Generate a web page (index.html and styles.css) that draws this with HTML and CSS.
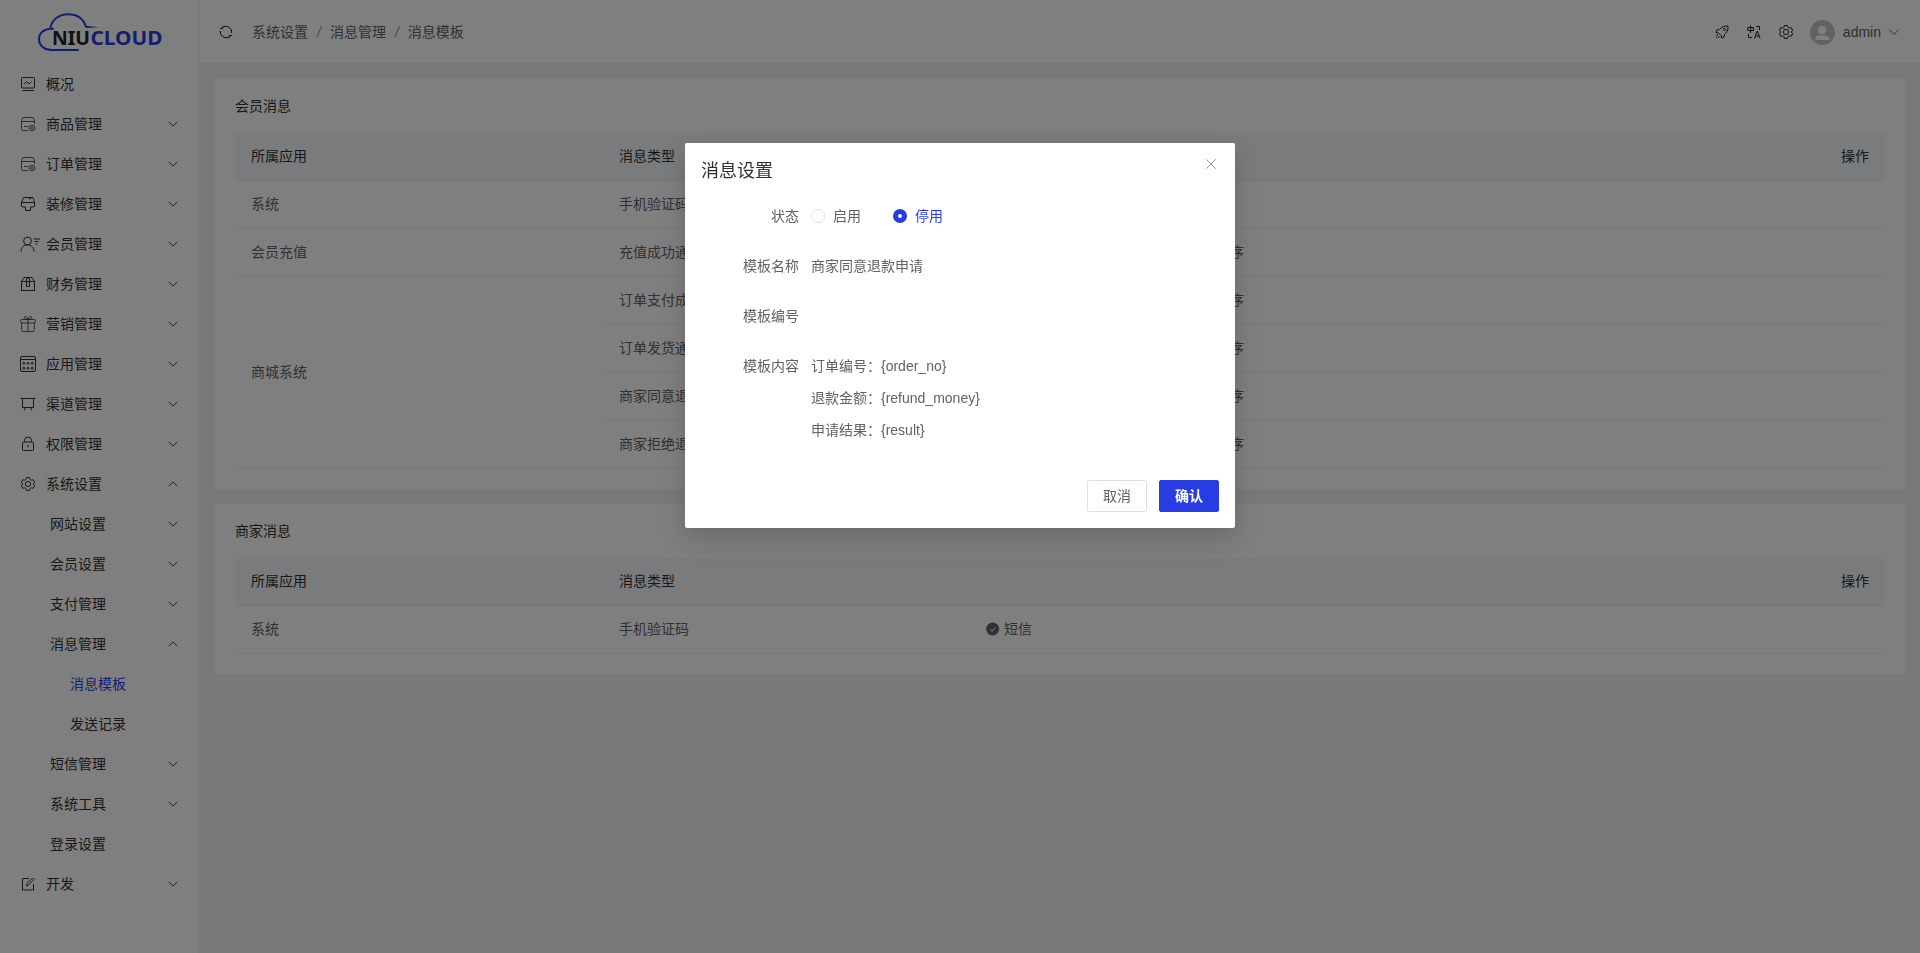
FILE: index.html
```html
<!DOCTYPE html>
<html lang="zh-CN">
<head>
    <meta charset="UTF-8">
    <meta name="viewport" content="width=device-width, initial-scale=1.0">
    <title>消息模板</title>
    <link rel="stylesheet" href="styles.css">
</head>
<body>
    <svg class="sprite" aria-hidden="true">
        <symbol id="i-down" viewBox="0 0 12 12"><path d="M1.800 4 6 8l4.200-4"/></symbol>
        <symbol id="i-up" viewBox="0 0 12 12"><path d="M1.800 8 6 4l4.200 4"/></symbol>
        <symbol id="i-chart" viewBox="0 0 16 16"><rect x="1.500" y="1.500" width="13" height="10.500" rx="1"/><path d="M4 8.500l2.500-3 2.500 2.500 2.500-2.500M2.500 14.500h11.500"/></symbol>
        <symbol id="i-box" viewBox="0 0 16 16"><path d="M8 14.500H2.500a1 1 0 0 1-1-1V4.500l1.300-3h10.400l1.300 3V8M1.500 5.500h13M4 10.500h4"/><circle cx="12" cy="12" r="2.800"/><circle cx="12" cy="12" r="1"/></symbol>
        <symbol id="i-brush" viewBox="0 0 16 16"><path d="M3.500 1.500h9.500l1.500 5v3.500a1 1 0 0 1-1 1H10.500v3.500h-5V11H2.500a1 1 0 0 1-1-1V6.500l2-5M1.500 6.500h13M8 1.500l1.500 1.500M10 3.500l1-2"/></symbol>
        <symbol id="i-user" viewBox="0 0 20 16"><circle cx="7.500" cy="5" r="3.900"/><path d="M1 15.500c.3-4 2.500-6.600 6.500-6.600s6.200 2.600 6.500 6.600M13.500 3H20M14.500 5.500h4M15.500 8h2"/></symbol>
        <symbol id="i-case" viewBox="0 0 16 16"><path d="M1.500 5.500h13v9h-13zM1.500 5.500l2.500-4h8l2.500 4M6.500 5.500v5h3v-5M6.500 5V3l1.500-1 1.500 1v2"/></symbol>
        <symbol id="i-gift" viewBox="0 0 16 16"><rect x=".7" y="3.500" width="14.600" height="3.500" rx="1"/><path d="M1.700 7v7.500a1 1 0 0 0 1 1h10.600a1 1 0 0 0 1-1V7M8 3.500v12M8 3.500C6 3.500 4 2.500 4.300 1.200S7.500.5 8 3.500c.5-3 3.400-3.500 3.700-2.300S10 3.500 8 3.500z"/></symbol>
        <symbol id="i-grid" viewBox="0 0 16 16"><rect x=".5" y=".5" width="15" height="15" rx="1.500"/><path d="M.5 3.500h15"/><circle cx="3.800" cy="7.300" r="1"/><circle cx="8" cy="7.300" r="1"/><circle cx="12.200" cy="7.300" r="1"/><circle cx="3.800" cy="12.300" r="1"/><circle cx="8" cy="12.300" r="1"/><circle cx="12.200" cy="12.300" r="1"/></symbol>
        <symbol id="i-board" viewBox="0 0 16 16"><path d="M.5 2.500h15M2.500 2.500v9h11v-9M5.500 11.500l-1.500 3M10.500 11.500l1.500 3"/></symbol>
        <symbol id="i-lock" viewBox="0 0 16 16"><rect x="2.500" y="6" width="11" height="8.500" rx="1"/><path d="M4.500 6V4.500a3.500 3.500 0 0 1 7 0V6M8 9v2.500"/></symbol>
        <symbol id="i-gear" viewBox="0 0 16 16"><path d="M6.600 1.500h2.800l.6 1.900 1.300.8 1.900-.5 1.400 2.500L13.300 8l1.300 1.800-1.400 2.500-1.900-.5-1.300.8-.6 1.900H6.600L6 12.600l-1.300-.8-1.900.5-1.400-2.500L2.700 8 1.400 6.200l1.400-2.500 1.900.5L6 3.400z" stroke-linejoin="round"/><circle cx="8" cy="8" r="2.600"/></symbol>
        <symbol id="i-edit" viewBox="0 0 16 16"><path d="M9 2.500H2.500v11.500h11V8"/><path d="M6.500 10l.5-2.500 5.500-5.500 1.500 1.500-5.500 5.500z"/></symbol>
        <symbol id="i-refresh" viewBox="0 0 14 14"><path d="M5 1.500A6 6 0 0 1 12.700 7v1M9 12.500A6 6 0 0 1 1.300 7V6M1 3.300h3V.8M13 10.700h-3v2.500"/></symbol>
        <symbol id="i-rocket" viewBox="0 0 14 14"><path d="M13 1C9 .8 6.500 2 4.500 4.500L1.800 5 1 7.500l2.300.3 3 3 .3 2.200 2.400-.8.500-2.700C12 7.500 13.300 5 13 1zM3 9.500l-2 1M4.500 11l-1.500 2M1 13l1-1"/><circle cx="9.500" cy="4.500" r="1"/></symbol>
        <symbol id="i-lang" viewBox="0 0 14 14"><path d="M.8 2.500h5.700v3H.8zM3.600.3v7.500M9 1.500h3.500V5M1.500 9v3.500H5M7.500 13.500l2.800-7.500 2.800 7.500M8.500 11h3.600"/></symbol>
        <symbol id="i-close" viewBox="0 0 12 12"><path d="M1.300 1.300l9.400 9.400M10.700 1.300l-9.400 9.400"/></symbol>
        <symbol id="i-check" viewBox="0 0 14 14"><circle cx="6.700" cy="7" r="6.500" fill="currentColor" stroke="none"/><path d="M4 7.200l2 2.100 3.500-4" stroke="#fff"/></symbol>
    </svg>

    <div class="layout">
        <aside class="sidebar">
            <div class="logo">
                <svg width="126" height="40" viewBox="0 0 126 40">
                    <path class="cloud" d="M41 38H14.500C7.500 38 2 33.500 2 27S7.500 16.500 16 16.800M13.500 15C15.500 7.500 22 2.200 31 2.200c9 0 15.500 4.800 18 12.500"/>
                    <path class="tail" d="M48.500 13.700 62 15.300l-13 .8z"/>
                    <text class="niu" x="15" y="33" textLength="38" lengthAdjust="spacingAndGlyphs">NIU</text>
                    <text class="cld" x="53.500" y="33" textLength="72" lengthAdjust="spacingAndGlyphs">CLOUD</text>
                </svg>
            </div>
            <ul class="menu">
                <li><svg class="icon"><use href="#i-chart"/></svg><span>概况</span></li>
                <li><svg class="icon thin"><use href="#i-box"/></svg><span>商品管理</span><svg class="arrow"><use href="#i-down"/></svg></li>
                <li><svg class="icon thin"><use href="#i-box"/></svg><span>订单管理</span><svg class="arrow"><use href="#i-down"/></svg></li>
                <li><svg class="icon"><use href="#i-brush"/></svg><span>装修管理</span><svg class="arrow"><use href="#i-down"/></svg></li>
                <li><svg class="icon wide"><use href="#i-user"/></svg><span>会员管理</span><svg class="arrow"><use href="#i-down"/></svg></li>
                <li><svg class="icon"><use href="#i-case"/></svg><span>财务管理</span><svg class="arrow"><use href="#i-down"/></svg></li>
                <li><svg class="icon thin"><use href="#i-gift"/></svg><span>营销管理</span><svg class="arrow"><use href="#i-down"/></svg></li>
                <li><svg class="icon"><use href="#i-grid"/></svg><span>应用管理</span><svg class="arrow"><use href="#i-down"/></svg></li>
                <li><svg class="icon"><use href="#i-board"/></svg><span>渠道管理</span><svg class="arrow"><use href="#i-down"/></svg></li>
                <li><svg class="icon"><use href="#i-lock"/></svg><span>权限管理</span><svg class="arrow"><use href="#i-down"/></svg></li>
                <li><svg class="icon"><use href="#i-gear"/></svg><span>系统设置</span><svg class="arrow"><use href="#i-up"/></svg></li>
                <li class="level-2"><span>网站设置</span><svg class="arrow"><use href="#i-down"/></svg></li>
                <li class="level-2"><span>会员设置</span><svg class="arrow"><use href="#i-down"/></svg></li>
                <li class="level-2"><span>支付管理</span><svg class="arrow"><use href="#i-down"/></svg></li>
                <li class="level-2"><span>消息管理</span><svg class="arrow"><use href="#i-up"/></svg></li>
                <li class="level-3 active"><span>消息模板</span></li>
                <li class="level-3"><span>发送记录</span></li>
                <li class="level-2"><span>短信管理</span><svg class="arrow"><use href="#i-down"/></svg></li>
                <li class="level-2"><span>系统工具</span><svg class="arrow"><use href="#i-down"/></svg></li>
                <li class="level-2"><span>登录设置</span></li>
                <li><svg class="icon"><use href="#i-edit"/></svg><span>开发</span><svg class="arrow"><use href="#i-down"/></svg></li>
            </ul>
        </aside>

        <div class="main">
            <header class="header">
                <svg class="refresh"><use href="#i-refresh"/></svg>
                <nav class="breadcrumb">
                    <span>系统设置</span><i>/</i><span>消息管理</span><i>/</i><span>消息模板</span>
                </nav>
                <div class="tools">
                    <svg><use href="#i-rocket"/></svg>
                    <svg><use href="#i-lang"/></svg>
                    <svg class="gear"><use href="#i-gear"/></svg>
                </div>
                <div class="user">
                    <svg class="avatar" viewBox="0 0 25 25"><circle cx="12.500" cy="12.500" r="12.500" fill="#c0c4cc"/><circle cx="12" cy="10" r="4.200" fill="#fff"/><path d="M5 20c0-3 2-4.500 4.500-4.500h5.500c2.500 0 4.500 1.500 4.500 4.500z" fill="#fff"/></svg>
                    <span>admin</span>
                    <svg class="user-arrow"><use href="#i-down"/></svg>
                </div>
            </header>

            <div class="content">
                <section class="card">
                    <h3>会员消息</h3>
                    <table class="table">
                        <colgroup><col class="col-app"><col class="col-type"><col><col class="col-action"></colgroup>
                        <thead>
                            <tr><th>所属应用</th><th>消息类型</th><th></th><th class="right">操作</th></tr>
                        </thead>
                        <tbody>
                            <tr><td>系统</td><td>手机验证码</td><td><div class="ways"><span><svg><use href="#i-check"/></svg>短信</span></div></td><td></td></tr>
                            <tr><td>会员充值</td><td>充值成功通知</td><td><div class="ways"><span><svg><use href="#i-check"/></svg>短信</span><span><svg><use href="#i-check"/></svg>微信公众号</span><span><svg><use href="#i-check"/></svg>微信小程序</span></div></td><td></td></tr>
                            <tr><td rowspan="4">商城系统</td><td>订单支付成功通知</td><td><div class="ways"><span><svg><use href="#i-check"/></svg>短信</span><span><svg><use href="#i-check"/></svg>微信公众号</span><span><svg><use href="#i-check"/></svg>微信小程序</span></div></td><td></td></tr>
                            <tr><td>订单发货通知</td><td><div class="ways"><span><svg><use href="#i-check"/></svg>短信</span><span><svg><use href="#i-check"/></svg>微信公众号</span><span><svg><use href="#i-check"/></svg>微信小程序</span></div></td><td></td></tr>
                            <tr><td>商家同意退款申请</td><td><div class="ways"><span><svg><use href="#i-check"/></svg>短信</span><span><svg><use href="#i-check"/></svg>微信公众号</span><span><svg><use href="#i-check"/></svg>微信小程序</span></div></td><td></td></tr>
                            <tr><td>商家拒绝退款申请</td><td><div class="ways"><span><svg><use href="#i-check"/></svg>短信</span><span><svg><use href="#i-check"/></svg>微信公众号</span><span><svg><use href="#i-check"/></svg>微信小程序</span></div></td><td></td></tr>
                        </tbody>
                    </table>
                </section>

                <section class="card">
                    <h3>商家消息</h3>
                    <table class="table">
                        <colgroup><col class="col-app"><col class="col-type"><col><col class="col-action"></colgroup>
                        <thead>
                            <tr><th>所属应用</th><th>消息类型</th><th></th><th class="right">操作</th></tr>
                        </thead>
                        <tbody>
                            <tr><td>系统</td><td>手机验证码</td><td><div class="ways"><span><svg><use href="#i-check"/></svg>短信</span></div></td><td></td></tr>
                        </tbody>
                    </table>
                </section>
            </div>
        </div>
    </div>

    <div class="overlay">
        <div class="dialog">
            <div class="dialog-header">
                <span>消息设置</span>
                <svg class="close"><use href="#i-close"/></svg>
            </div>
            <div class="form">
                <div class="form-item">
                    <label>状态</label>
                    <div class="radios">
                        <span class="radio"><i></i>启用</span>
                        <span class="radio checked"><i></i>停用</span>
                    </div>
                </div>
                <div class="form-item">
                    <label>模板名称</label>
                    <div>商家同意退款申请</div>
                </div>
                <div class="form-item">
                    <label>模板编号</label>
                    <div></div>
                </div>
                <div class="form-item">
                    <label>模板内容</label>
                    <div>
                        <p>订单编号：{order_no}</p>
                        <p>退款金额：{refund_money}</p>
                        <p>申请结果：{result}</p>
                    </div>
                </div>
            </div>
            <div class="dialog-footer">
                <button class="btn">取消</button>
                <button class="btn primary">确认</button>
            </div>
        </div>
    </div>
</body>
</html>
```

FILE: styles.css
```css
:root {
    --primary-color: #273de3;
    --text-color: #303133;
    --text-regular: #606266;
    --border-color: #ebeef5;
    --page-bg: #f2f2f2;
}

* {
    box-sizing: border-box;
}

body {
    margin: 0;
    font-family: "Liberation Sans", "Noto Sans CJK SC", sans-serif;
    font-size: 14px;
    line-height: 20px;
    color: var(--text-regular);
    background: var(--page-bg);
    overflow: hidden;
}

svg {
    fill: none;
    stroke: currentColor;
    flex-shrink: 0;
}

.sprite {
    display: none;
}

.layout {
    display: flex;
    height: 100vh;
}

/* sidebar */
.sidebar {
    width: 200px;
    background: #fff;
    border-right: 1px solid #f5f5f5;
    color: var(--text-color);
}

.logo {
    height: 64px;
    padding: 12px 0 0 37px;
}

.logo svg {
    display: block;
    stroke: none;
    overflow: visible;
}

.logo text {
    font-family: "Noto Sans", sans-serif;
    font-size: 20px;
    font-weight: bold;
}

.logo .cloud {
    stroke: var(--primary-color);
    stroke-width: 2;
    stroke-linecap: round;
}

.logo .tail,
.logo .cld {
    fill: var(--primary-color);
}

.logo .niu {
    fill: #222;
}

.menu {
    list-style: none;
    margin: 0;
    padding: 0;
}

.menu li {
    display: flex;
    align-items: center;
    height: 40px;
    padding: 0 20px;
}

.menu .icon {
    width: 16px;
    height: 16px;
    margin-right: 10px;
    stroke-width: 1;
}

.menu .icon.wide {
    width: 20px;
    margin-right: 6px;
}

.menu .icon.thin {
    stroke-width: 0.8;
}

.menu .arrow {
    width: 12px;
    height: 12px;
    margin-left: auto;
    stroke-width: 0.9;
}

.menu .level-2 {
    padding-left: 50px;
}

.menu .level-3 {
    padding-left: 70px;
}

.menu .active {
    color: var(--primary-color);
}

/* header */
.main {
    flex: 1;
}

.header {
    display: flex;
    align-items: center;
    height: 63px;
    padding: 1px 19px 0 19px;
    background: #fff;
    box-shadow: 0 1px 3px #dfe8f0;
}

.refresh {
    width: 14px;
    height: 14px;
    margin-right: 19px;
    color: #111;
}

.breadcrumb {
    flex: 1;
    display: flex;
    align-items: baseline;
}

.breadcrumb i {
    margin: 0 9px;
    color: #909399;
}

.tools {
    display: flex;
    align-items: center;
    gap: 18px;
    margin-right: 16px;
    color: #222;
}

.tools svg {
    width: 14px;
    height: 14px;
}

.tools .gear {
    width: 16px;
    height: 16px;
    margin-left: -1px;
}

.user {
    display: flex;
    align-items: center;
}

.avatar {
    width: 25px;
    height: 25px;
    margin-right: 8px;
    stroke: none;
}

.user-arrow {
    width: 14px;
    height: 14px;
    margin-left: 6px;
    stroke-width: 0.8;
}

/* cards */
.content {
    display: flex;
    flex-direction: column;
    gap: 15px;
    padding: 16px 15px;
}

.card {
    padding: 20px;
    background: #fff;
}

.card h3 {
    margin: 0 0 20px;
    font-size: 14px;
    font-weight: 400;
    line-height: 14px;
    color: var(--text-color);
}

.table {
    width: 100%;
    table-layout: fixed;
    border-collapse: separate;
    border-spacing: 0;
}

.col-app {
    width: 368px;
}

.col-type {
    width: 367px;
}

.col-action {
    width: 300px;
}

.table th,
.table td {
    height: 48px;
    padding: 0 16px 1px;
    border-bottom: 1px solid var(--border-color);
    font-weight: 400;
    text-align: left;
}

.table th {
    background: #f5f7f9;
    color: var(--text-color);
}

.table th.right {
    text-align: right;
}

.ways {
    display: flex;
    gap: 18px;
}

.ways span {
    display: flex;
    align-items: center;
}

.ways svg {
    width: 14px;
    height: 14px;
    margin-right: 4px;
}

/* dialog */
.overlay {
    position: fixed;
    inset: 0;
    background: rgba(0, 0, 0, 0.5);
}

.dialog {
    width: 550px;
    margin: 15vh auto 0;
    padding: 16px;
    border-radius: 2px;
    background: #fff;
    box-shadow: 0 12px 32px 4px rgba(0, 0, 0, 0.1), 0 8px 20px rgba(0, 0, 0, 0.08);
}

.dialog-header {
    display: flex;
    justify-content: space-between;
    height: 41px;
    font-size: 18px;
    line-height: 24px;
    color: var(--text-color);
}

.close {
    width: 12px;
    height: 12px;
    margin: -1px 2px 0 0;
    color: #909399;
}

.form-item {
    display: flex;
    margin-bottom: 18px;
    line-height: 32px;
}

.form-item label {
    width: 110px;
    padding-right: 12px;
    text-align: right;
}

.form-item p {
    margin: 0;
}

.radios {
    display: flex;
    gap: 32px;
}

.radio {
    display: flex;
    align-items: center;
}

.radio i {
    width: 14px;
    height: 14px;
    margin-right: 8px;
    border: 1px solid #dcdfe6;
    border-radius: 50%;
}

.radio.checked {
    color: var(--primary-color);
}

.radio.checked i {
    border: 5px solid var(--primary-color);
}

.dialog-footer {
    display: flex;
    justify-content: flex-end;
    gap: 12px;
    padding-top: 16px;
}

.btn {
    width: 60px;
    height: 32px;
    padding: 0;
    border: 1px solid #dcdfe6;
    border-radius: 2px;
    background: #fff;
    color: var(--text-regular);
    font-family: inherit;
    font-size: 14px;
    line-height: 20px;
}

.btn.primary {
    border-color: var(--primary-color);
    background: var(--primary-color);
    color: #fff;
    font-weight: 700;
}
```
